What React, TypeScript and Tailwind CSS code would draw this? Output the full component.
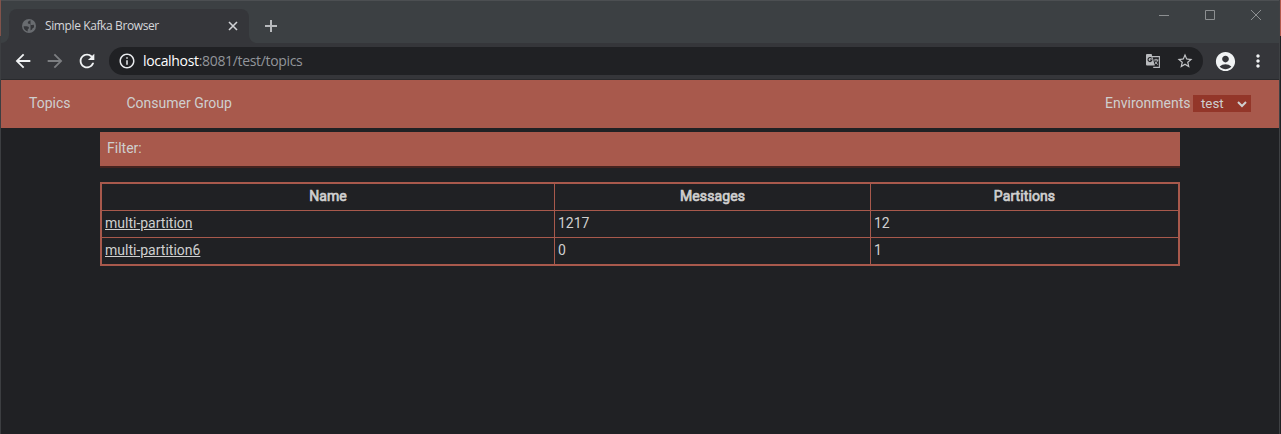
import type { ReactNode } from "react";
import {
  MdAccountCircle,
  MdArrowBack,
  MdArrowForward,
  MdInfoOutline,
  MdMoreVert,
  MdRefresh,
  MdStarOutline,
} from "react-icons/md";

const topics = [
  { name: "multi-partition", messages: 1217, partitions: 12 },
  { name: "multi-partition6", messages: 0, partitions: 1 },
];

function TabFlare({ flip = false }: { flip?: boolean }) {
  return (
    <svg width="8" height="8" viewBox="0 0 8 8" className={flip ? "-scale-x-100 self-end" : "self-end"}>
      <path d="M0 8A8 8 0 0 0 8 0V8Z" fill="#35363a" />
    </svg>
  );
}

function GlobeIcon() {
  return (
    <svg width="16" height="16" viewBox="0 0 16 16">
      <circle cx="8" cy="8" r="7" fill="#696c70" />
      <path
        d="M9.500 2.300C8 3 6.800 3.600 6.800 4.700c0 .8.600 1 1.400 1.100 1 .1 1 1.200 1.900 1.300 1.200.1 1.500-.6 2.600-.4.500.900.500 2.100.100 3.100-.700-.3-1.200.300-1.400 1-.200.800-1 1.100-1.900 1.700M2.600 8.200h3.200c1 0 2.200.8 2.200 1.800 0 .8-1.300.8-1.300 1.700v1.700C4.500 13 2.600 11 2.600 8.200Z"
        fill="#35363a"
      />
    </svg>
  );
}

function TranslateIcon() {
  return (
    <svg width="14" height="14" viewBox="0 0 14 14" fill="none">
      <path d="M6 2.6h7.4v10.8H7.2" stroke="#b9bbbe" strokeWidth="1.1" />
      <path d="M7.500 6h5M10 4.800V6M11.600 6.200c-.5 2-1.600 3-3 4M9 7.500c.6 1.300 1.600 2.300 2.800 3" stroke="#b9bbbe" />
      <path d="M1 0h4.600l3.200 11.500H1a1 1 0 0 1-1-1V1a1 1 0 0 1 1-1Z" fill="#b9bbbe" />
      <path d="M5.600 4.300A2 2 0 1 0 6 6H4" stroke="#202124" strokeWidth="1.100" />
    </svg>
  );
}

function TabStrip() {
  return (
    <div className="flex h-[43px] border-t border-[#4c4f52] bg-[#3c4043]">
      <TabFlare />
      <div className="mt-2 flex w-60 items-center rounded-t-lg bg-[#35363a] pl-3 pr-[10px]">
        <GlobeIcon />
        <span className="ml-2 flex-1 whitespace-nowrap font-['Open_Sans',sans-serif] text-[12px] leading-4 tracking-[-0.39px] text-[#d5d7da]">
          Simple Kafka Browser
        </span>
        <svg width="12" height="12" viewBox="0 0 12 12" stroke="#d0d2d5" strokeWidth="1.6">
          <path d="M2 2l8 8M10 2l-8 8" />
        </svg>
      </div>
      <TabFlare flip />
      <svg className="ml-[7px] mt-[18px]" width="14" height="14" viewBox="0 0 14 14" stroke="#b8babd" strokeWidth="2">
        <path d="M1 7h12M7 1v12" />
      </svg>
      <svg className="ml-auto mr-[17px] mt-2" width="104" height="12" viewBox="0 0 104 12" fill="none" stroke="#8c8f91">
        <path d="M1 6.5h10M47.5 1.5h9v9h-9zM93 1l10 10M103 1L93 11" />
      </svg>
    </div>
  );
}

function Toolbar() {
  return (
    <div className="flex h-[37px] items-center border-b border-[#292a2d] bg-[#35363a] pl-[11px] pr-[11px]">
      <MdArrowBack size={22} color="#f1f3f4" />
      <MdArrowForward size={22} color="#7c7e81" className="ml-[10px]" />
      <MdRefresh size={22} color="#f1f3f4" className="ml-[10px]" />
      <div className="ml-[11px] flex h-7 w-[1094px] items-center rounded-full bg-[#202124] pl-[9px] pr-[9px]">
        <MdInfoOutline size={18} color="#e8eaed" />
        <span className="ml-[7px] flex-1 whitespace-nowrap font-['Open_Sans',sans-serif] text-[14px] leading-5 tracking-[-0.33px] text-[#92959a]">
          <span className="text-white">localhost</span>:8081/test/topics
        </span>
        <TranslateIcon />
        <MdStarOutline size={18} color="#c3c5c8" className="ml-[16px]" />
      </div>
      <MdAccountCircle size={23} color="#f1f3f4" className="ml-[11px]" />
      <MdMoreVert size={20} color="#f1f3f4" className="ml-[11px]" />
    </div>
  );
}

function NavBar() {
  return (
    <nav className="flex h-12 items-center bg-[#a8594c] pb-0.5 pl-7 pr-7 text-[#cfcfcf]">
      <a>Topics</a>
      <a className="ml-14">Consumer Group</a>
      <label className="ml-auto flex items-center">
        Environments
        <span className="mt-px ml-[2.500px] flex h-[17px] w-[58px] items-center justify-between bg-[#933629] pl-2 pr-1 text-[13.33px] leading-4">
          test
          <svg width="10" height="8" viewBox="0 0 10 8" fill="none" stroke="#cfcfcf" strokeWidth="2">
            <path d="M1 2l4 4 4-4" />
          </svg>
        </span>
      </label>
    </nav>
  );
}

function HeaderCell({ children }: { children: ReactNode }) {
  return (
    <th className="border-b border-r border-[#a8594c] p-0 pb-0.5 font-normal tracking-[0.1px] [-webkit-text-stroke:0.700px_#cfcfcf] last:border-r-0">
      {children}
    </th>
  );
}

function Cell({ children }: { children: ReactNode }) {
  return (
    <td className="border-b border-r border-[#a8594c] p-0 pb-0.5 pl-[3px] last:border-r-0 group-last:border-b-0">
      {children}
    </td>
  );
}

export default function App() {
  return (
    <div className="flex h-[434px] w-[1281px] overflow-hidden bg-[#202124] font-[Roboto,sans-serif] text-[14px] leading-5 text-[#cfcfcf]">
      <div className="w-px bg-[#3c3e41]">
        <div className="h-9 bg-[#81534b]" />
      </div>
      <div className="flex min-w-0 flex-1 flex-col">
        <TabStrip />
        <Toolbar />
        <NavBar />
        <main className="ml-[99px] mt-1 w-[1080px]">
          <div className="h-9 border-b-2 border-[#44231f] bg-[#a8594c] pl-[7px] pt-1.5">Filter:</div>
          <table className="mt-[14px] w-full table-fixed border-separate border-spacing-0 border-2 border-[#a8594c]">
            <colgroup>
              <col className="w-[453px]" />
              <col className="w-[316px]" />
              <col />
            </colgroup>
            <thead>
              <tr className="h-[27px]">
                <HeaderCell>Name</HeaderCell>
                <HeaderCell>Messages</HeaderCell>
                <HeaderCell>Partitions</HeaderCell>
              </tr>
            </thead>
            <tbody>
              {topics.map((topic) => (
                <tr key={topic.name} className="group h-[27px] last:h-[26px]">
                  <Cell>
                    <a className="underline">{topic.name}</a>
                  </Cell>
                  <Cell>{topic.messages}</Cell>
                  <Cell>{topic.partitions}</Cell>
                </tr>
              ))}
            </tbody>
          </table>
        </main>
      </div>
      <div className="w-px bg-[#3f4144]" />
      <div className="w-px bg-[#202124]">
        <div className="h-9 bg-[#b2584b]" />
      </div>
    </div>
  );
}
